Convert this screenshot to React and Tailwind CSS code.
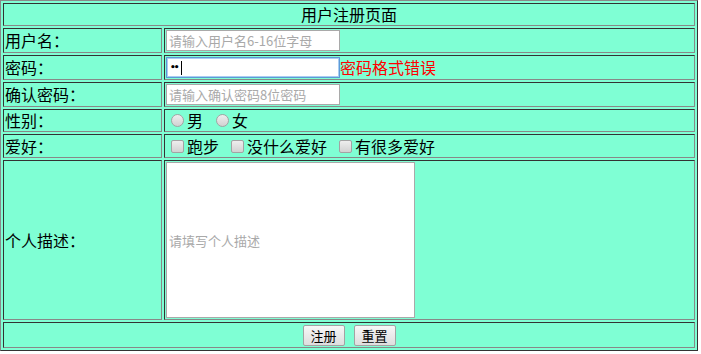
const cell =
  "border border-t-[#333] border-l-[#333] border-r-[#888] border-b-[#888] p-px align-middle";

const field =
  "w-[174px] h-[21px] border border-[#a9a9a9] bg-white px-[2px] text-[13px] text-black placeholder:text-[#a9a9a9] outline-none";

const box =
  "appearance-none w-[13px] h-[13px] border border-[#a3a3a3] bg-linear-to-b from-[#eeeeee] to-[#d2d2d2]";

function Label({ children }) {
  return <span className="text-base leading-[19px]">{children}</span>;
}

export default function App() {
  return (
    <div className="w-full min-h-screen bg-white font-['Noto_Sans_CJK_SC','Noto_Sans',sans-serif] text-black">
      <table className="w-[698px] border-separate border-spacing-0.5 border border-t-[#8a8a8a] border-l-[#8a8a8a] border-r-[#333] border-b-[#333] bg-[#7fffd4]">
        <tbody>
          <tr>
            <td colSpan={2} className={cell}>
              <div className="h-[19px] flex items-center justify-center">
                <Label>用户注册页面</Label>
              </div>
            </td>
          </tr>
          <tr>
            <td className={cell + " w-[159px]"}>
              <div className="h-[21px] flex items-center">
                <Label>用户名：</Label>
              </div>
            </td>
            <td className={cell}>
              <div className="h-[21px] flex items-center">
                <input className={field} type="text" placeholder="请输入用户名6-16位字母" />
              </div>
            </td>
          </tr>
          <tr>
            <td className={cell}>
              <div className="h-[21px] flex items-center">
                <Label>密码：</Label>
              </div>
            </td>
            <td className={cell}>
              <div className="h-[21px] flex items-center">
                <div className="w-[174px] h-[21px] border border-[#5d9ad6] shadow-[inset_0_0_0_1px_#a9cdf2] bg-white px-[3px] flex items-center">
                  <span className="font-['DejaVu_Sans',sans-serif] text-[9px] font-bold leading-none tracking-[-2px]">••</span>
                  <span className="ml-[3px] w-px h-[14px] bg-black" />
                </div>
                <span className="text-base leading-[19px] text-[#ff0000]">密码格式错误</span>
              </div>
            </td>
          </tr>
          <tr>
            <td className={cell}>
              <div className="h-[21px] flex items-center">
                <Label>确认密码：</Label>
              </div>
            </td>
            <td className={cell}>
              <div className="h-[21px] flex items-center">
                <input className={field} type="password" placeholder="请输入确认密码8位密码" />
              </div>
            </td>
          </tr>
          <tr>
            <td className={cell}>
              <div className="h-[19px] flex items-center">
                <Label>性别：</Label>
              </div>
            </td>
            <td className={cell}>
              <div className="h-[19px] flex items-center">
                <input type="radio" name="sex" className={box + " rounded-full ml-[5px] mr-[3px]"} />
                <Label>男</Label>
                <input type="radio" name="sex" className={box + " rounded-full ml-[13px] mr-[3px]"} />
                <Label>女</Label>
              </div>
            </td>
          </tr>
          <tr>
            <td className={cell}>
              <div className="h-[20px] flex items-center">
                <Label>爱好：</Label>
              </div>
            </td>
            <td className={cell}>
              <div className="h-[20px] flex items-center">
                <input type="checkbox" className={box + " rounded-[2px] ml-[5px] mr-[3px]"} />
                <Label>跑步</Label>
                <input type="checkbox" className={box + " rounded-[2px] ml-[12px] mr-[3px]"} />
                <Label>没什么爱好</Label>
                <input type="checkbox" className={box + " rounded-[2px] ml-[12px] mr-[3px]"} />
                <Label>有很多爱好</Label>
              </div>
            </td>
          </tr>
          <tr>
            <td className={cell}>
              <div className="h-[156px] flex items-center">
                <Label>个人描述：</Label>
              </div>
            </td>
            <td className={cell}>
              <div className="h-[156px] flex items-center">
                <input
                  type="text"
                  placeholder="请填写个人描述"
                  className="w-[249px] h-[156px] border border-[#a9a9a9] bg-white px-[2px] text-[13px] placeholder:text-[#a9a9a9] outline-none"
                />
              </div>
            </td>
          </tr>
          <tr>
            <td colSpan={2} className={cell}>
              <div className="h-[22px] flex items-center justify-center gap-[9px]">
                <button className="w-[42px] h-[21px] border border-[#a3a3a3] rounded-[2px] bg-linear-to-b from-[#f7f7f7] to-[#dedede] text-[13px] leading-none">
                  注册
                </button>
                <button className="w-[42px] h-[21px] border border-[#a3a3a3] rounded-[2px] bg-linear-to-b from-[#f7f7f7] to-[#dedede] text-[13px] leading-none">
                  重置
                </button>
              </div>
            </td>
          </tr>
        </tbody>
      </table>
    </div>
  );
}
